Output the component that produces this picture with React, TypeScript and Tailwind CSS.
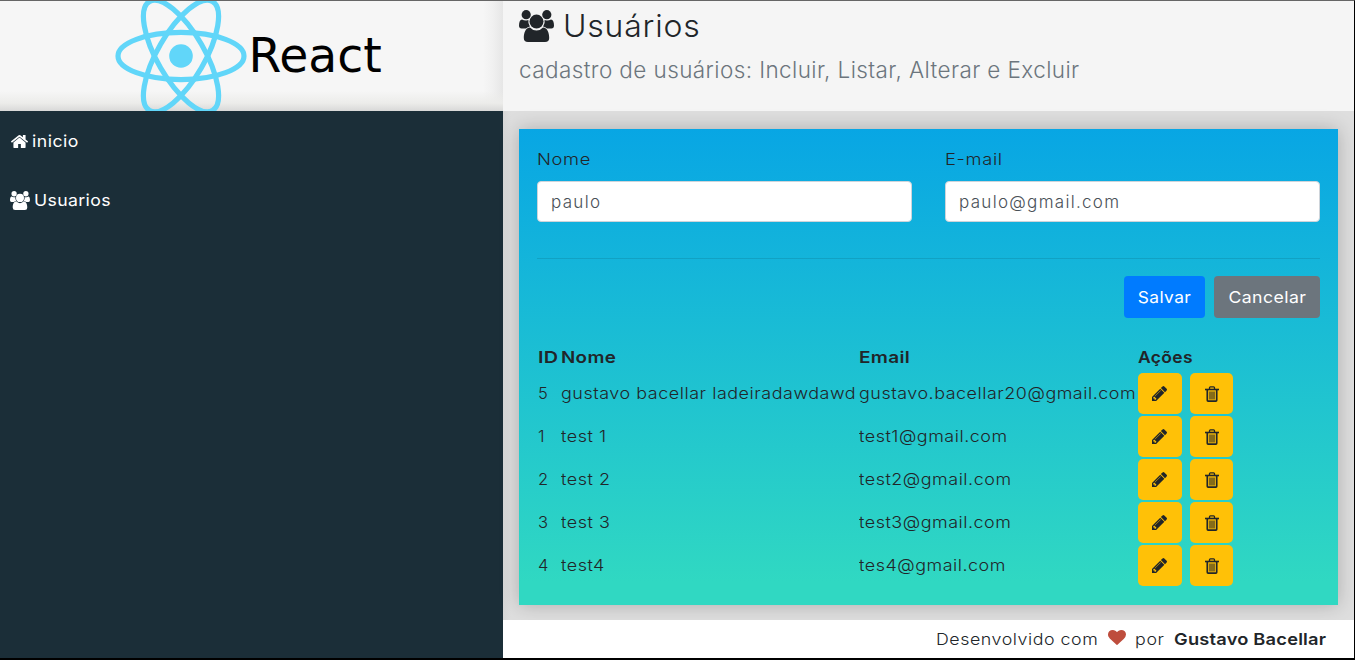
import React from 'react';

type IconProps = { className?: string };

const UsersIcon = ({ className }: IconProps) => {
  const side =
    'M3 9.4Q5 10.7 7.4 10.5 8.8 10.4 9.4 10A8.4 8.4 0 0 0 10.9 16.5Q8.6 17 7 18.6H2.6Q0 18.6 0 15.6C0 12 1 9.6 3 9.4Z';
  return (
    <svg viewBox="0 0 35 32" preserveAspectRatio="none" fill="currentColor" className={className}>
      <circle cx="7.2" cy="4.7" r="4.6" />
      <circle cx="27.8" cy="4.7" r="4.6" />
      <circle cx="17.5" cy="11.6" r="7" />
      <path d={side} />
      <path d={side} transform="translate(35 0) scale(-1 1)" />
      <path d="M11 17.4A8.5 8.5 0 0 0 24 17.4C28.5 17.8 30.2 22.5 30.2 28Q30.2 32 26 32H9Q4.8 32 4.8 28C4.8 22.5 6.5 17.8 11 17.4Z" />
    </svg>
  );
};

const HomeIcon = ({ className }: IconProps) => (
  <svg viewBox="26 253 1612 1283" preserveAspectRatio="none" fill="currentColor" className={className}>
    <path d="M1408 992v480q0 26-19 45t-45 19H960v-384H704v384H320q-26 0-45-19t-19-45V992q0-1 .5-3t.5-3l575-474 575 474q1 2 1 6zm223-69l-62 74q-8 9-21 11h-3q-13 0-21-7L832 424l-692 577q-12 8-24 7-13-2-21-11l-62-74q-8-10-7-23.5t11-21.5l719-599q32-26 76-26t76 26l244 204V288q0-14 9-23t23-9h192q14 0 23 9t9 23v408l219 182q10 8 11 21.5t-7 23.5z" />
  </svg>
);

const PencilIcon = ({ className }: IconProps) => (
  <svg viewBox="128 149 1515 1515" fill="currentColor" className={className}>
    <path d="M491 1536l91-91-235-235-91 91v107h128v128h107zm523-928q0-22-22-22-10 0-17 7l-542 542q-7 7-7 17 0 22 22 22 10 0 17-7l542-542q7-7 7-17zm-54-192l416 416-832 832H128v-416zm683 96q0 53-37 90l-166 166-416-416 166-165q36-38 90-38 53 0 91 38l235 234q37 39 37 91z" />
  </svg>
);

const TrashIcon = ({ className }: IconProps) => (
  <svg viewBox="0 0 14 16" fill="none" stroke="currentColor" className={className}>
    <path d="M0 3.5h14" strokeWidth="1.6" />
    <path d="M4.5 3.2V1.7q0-.9.9-.9h3.2q.9 0 .9.9v1.5" strokeWidth="1.3" />
    <path d="M2.3 4v10.3q0 .8.8.8h7.8q.8 0 .8-.8V4" strokeWidth="1.7" />
    <path d="M5 5.5v8M7 5.5v8M9 5.5v8" strokeWidth="1.1" />
  </svg>
);

const HeartIcon = ({ className }: IconProps) => (
  <svg viewBox="0 128 1792 1536" preserveAspectRatio="none" fill="currentColor" className={className}>
    <path d="M896 1664q-26 0-44-18l-624-602q-10-8-27.5-26T145 952.5 77 855 23.5 734 0 596q0-220 127-344t351-124q62 0 126.5 21.5t120 58T820 276t76 68q36-36 76-68t95.5-68.5 120-58T1314 128q224 0 351 124t127 344q0 221-229 450l-623 600q-18 18-44 18z" />
  </svg>
);

const Atom = () => (
  <svg viewBox="-66 -55 132 110" className="h-[110px] w-[132px] shrink-0" fill="none" stroke="#61d6f9" strokeWidth="5.2">
    <ellipse rx="63" ry="23.6" />
    <ellipse rx="63" ry="23.6" transform="rotate(60)" />
    <ellipse rx="63" ry="23.6" transform="rotate(120)" />
    <circle r="11.8" fill="#61d6f9" stroke="none" />
  </svg>
);

type User = { id: number; name: string; email: string };

const users: User[] = [
  { id: 5, name: 'gustavo bacellar ladeiradawdawd', email: 'gustavo.bacellar20@gmail.com' },
  { id: 1, name: 'test 1', email: 'test1@gmail.com' },
  { id: 2, name: 'test 2', email: 'test2@gmail.com' },
  { id: 3, name: 'test 3', email: 'test3@gmail.com' },
  { id: 4, name: 'test4', email: 'tes4@gmail.com' },
];

const Field = ({ label, value }: { label: string; value: string }) => (
  <div className="w-[375px]">
    <label className="block h-[34px] origin-left scale-x-[1.11] leading-[24px] tracking-[0.6px]">{label}</label>
    <input
      readOnly
      value={value}
      className="block h-[41px] w-full rounded-[4px] border border-[#ced4da] bg-white px-[13px] text-[17px] tracking-[1.3px] text-[#495057] outline-none"
    />
  </div>
);

export default function App() {
  return (
    <div className="flex h-[660px] w-[1355px] flex-col overflow-hidden border-t border-r border-b-2 border-t-[#666] border-r-black border-b-black bg-[#dedede] font-['Inter',sans-serif] text-[16.5px] font-light text-[#212529]">
      <div className="flex min-h-0 flex-1">
        <aside className="flex w-[503px] shrink-0 flex-col">
          <div className="flex h-[110px] items-start bg-[#f6f6f6] bg-[linear-gradient(to_top,#d8d8d8_0,#ececea_8px,transparent_20px),linear-gradient(to_left,#e6e6e6_0,#f0f0f0_10px,transparent_20px)] pl-[115px]">
            <Atom />
            <span className="ml-[1.5px] pt-[28px] font-['DejaVu_Sans'] text-[47.3px] leading-[54px] font-normal text-black">React</span>
          </div>
          <nav className="flex flex-1 flex-col bg-[#1b2e38] pt-[10px] font-normal text-white">
            <a className="flex h-[40px] items-center pl-[11px]">
              <HomeIcon className="mr-[4px] h-[13px] w-[17px]" />
              <span className="origin-left scale-x-[1.07] tracking-[0.45px]">inicio</span>
            </a>
            <a className="mt-[19px] flex h-[40px] items-center pl-[10px]">
              <UsersIcon className="mr-[4px] h-[19px] w-[20px]" />
              <span className="origin-left scale-x-[1.07] tracking-[0.35px]">Usuarios</span>
            </a>
          </nav>
        </aside>
        <div className="flex min-w-0 flex-1 flex-col">
          <header className="h-[110px] bg-[#f5f5f5] pl-4">
            <h1 className="flex h-[50px] items-center text-[31px]">
              <UsersIcon className="mr-[9px] h-[32px] w-[35px]" />
              <span className="origin-left scale-x-[1.03] tracking-[0.8px]">Usuários</span>
            </h1>
            <p className="h-[40px] text-[22.5px] leading-[38px] tracking-[0.4px] text-[#6c757d]">
              cadastro de usuários: Incluir, Listar, Alterar e Excluir
            </p>
          </header>
          <main className="flex-1 bg-[linear-gradient(to_right,#d6d6d6_0,transparent_8px)] px-4 pt-[18px]">
            <section className="h-[476px] w-[819px] bg-[linear-gradient(#08a6e4,#30d8c2_95%)] px-[18px] pt-[18px] shadow-[0_0_18px_rgba(0,0,0,0.22)]">
              <div className="flex justify-between">
                <Field label="Nome" value="paulo" />
                <Field label="E-mail" value="paulo@gmail.com" />
              </div>
              <hr className="mt-[36px] border-t border-black/10" />
              <div className="mt-[17px] flex justify-end gap-[9px] font-normal text-white">
                <button className="h-[42px] w-[81px] rounded-[4px] bg-[#007bff]">
                  <span className="inline-block scale-x-[1.05] tracking-[0.4px]">Salvar</span>
                </button>
                <button className="h-[42px] w-[106px] rounded-[4px] bg-[#6c757d]">
                  <span className="inline-block scale-x-[1.07] tracking-[0.4px]">Cancelar</span>
                </button>
              </div>
              <div className="mt-[25px] ml-px grid h-[30px] grid-cols-[23px_298px_279px_1fr] leading-[28px] font-semibold tracking-[0.3px]">
                <span className="origin-left scale-x-[1.2]">ID</span>
                <span className="origin-left scale-x-[1.14]">Nome</span>
                <span className="origin-left scale-x-[1.15]">Email</span>
                <span className="origin-left scale-x-[1.06]">Ações</span>
              </div>
              {users.map((u) => (
                <div key={u.id} className="ml-px grid h-[43px] grid-cols-[23px_298px_279px_1fr] leading-[41px] whitespace-nowrap tracking-[0.5px]">
                  <span>{u.id}</span>
                  <span className="origin-left scale-x-[1.087]">{u.name}</span>
                  <span className="origin-left scale-x-[1.085]">{u.email}</span>
                  <span className="flex gap-2">
                    <button className="flex h-[41px] w-[44px] items-center justify-center rounded-[5px] bg-[#ffc107]">
                      <PencilIcon className="mr-px h-[15px] w-[15px]" />
                    </button>
                    <button className="flex h-[41px] w-[43px] items-center justify-center rounded-[5px] bg-[#ffc107]">
                      <TrashIcon className="h-[16px] w-[14px]" />
                    </button>
                  </span>
                </div>
              ))}
            </section>
          </main>
          <footer className="flex h-[38px] shrink-0 items-center justify-end bg-white pr-[28px]">
            <span className="origin-right scale-x-[1.08] tracking-[0.5px]">Desenvolvido com</span>
            <HeartIcon className="mr-[9px] mb-[3px] ml-[9px] h-[15px] w-[18px] text-[#be4d3d]" />
            <span className="mr-[12px] origin-left scale-x-[1.08] tracking-[0.6px]">por</span>
            <strong className="w-[152px] font-semibold">
              <span className="inline-block origin-left scale-x-[1.105] whitespace-nowrap tracking-[0.2px]">Gustavo Bacellar</span>
            </strong>
          </footer>
        </div>
      </div>
    </div>
  );
}
